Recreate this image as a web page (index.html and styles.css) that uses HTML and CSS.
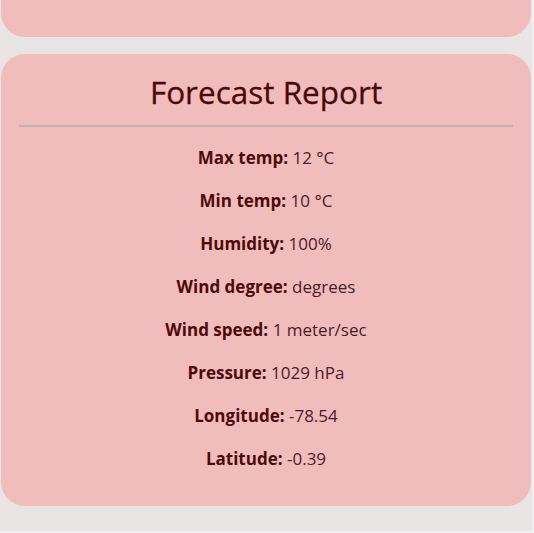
FILE: index.html
```html
<!DOCTYPE html>
<html>
<head>
<meta charset="utf-8">
<link rel="stylesheet" href="styles.css">
</head>
<body>
<div class="frame">
  <div class="card card-top"></div>
  <div class="card report">
    <h2 class="title">Forecast Report</h2>
    <hr class="rule">
    <div class="rows">
      <p class="row"><b class="label">Max temp:</b> 12 °C</p>
      <p class="row"><b class="label">Min temp:</b> 10 °C</p>
      <p class="row"><b class="label">Humidity:</b> 100%</p>
      <p class="row"><b class="label">Wind degree:</b> degrees</p>
      <p class="row"><b class="label">Wind speed:</b> 1 meter/sec</p>
      <p class="row"><b class="label">Pressure:</b> 1029 hPa</p>
      <p class="row"><b class="label">Longitude:</b> -78.54</p>
      <p class="row"><b class="label">Latitude:</b> -0.39</p>
    </div>
  </div>
</div>
</body>
</html>
```
FILE: styles.css
```css
html, body {
  margin: 0;
  padding: 0;
  background: #f0f0f0;
}
.frame {
  width: 532px;
  height: 531px;
  background: #e8e5e4;
  box-sizing: border-box;
  padding-left: 1px;
  display: flex;
  flex-direction: column;
  gap: 17px;
  font-family: "Open Sans", sans-serif;
  color: #4d0a0a;
  overflow: hidden;
}
.card {
  background: #f1bdbc;
  width: 530px;
}
.card-top {
  height: 37px;
  border-radius: 0 0 24px 24px;
  flex-shrink: 0;
}
.report {
  border-radius: 24px;
  padding: 16px 18px 36px;
  box-sizing: border-box;
  text-align: center;
}
.title {
  margin: 0;
  font-size: 31.5px;
  font-weight: 400;
  line-height: 44px;
  color: #4a0808;
  -webkit-text-stroke: 0.3px #4a0808;
}
.rule {
  margin: 11px 0 0;
  border: 0;
  height: 2px;
  background: #bdb3b3;
}
.rows {
  display: flex;
  flex-direction: column;
  gap: 20px;
  padding-top: 19px;
}
.row {
  margin: 0;
  font-size: 17px;
  line-height: 23px;
  color: #4a1a2a;
}
.label {
  font-weight: 700;
  color: #4d0a0a;
}
```
